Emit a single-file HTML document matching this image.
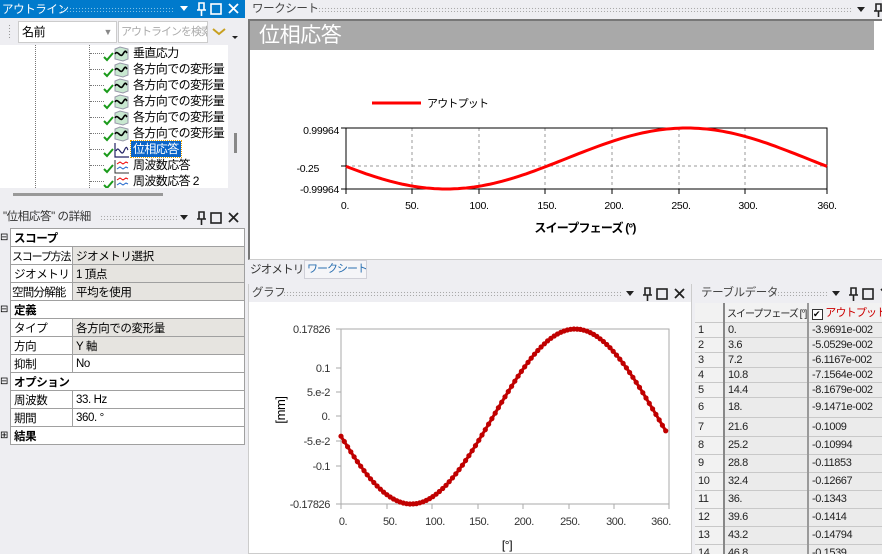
<!DOCTYPE html>
<html><head><meta charset="utf-8"><style>
*{box-sizing:border-box;margin:0;padding:0}
body{width:882px;height:554px;overflow:hidden;background:#eeeef2;font-family:"Liberation Sans","Noto Sans CJK JP",sans-serif;font-size:12px;color:#000;position:relative;letter-spacing:-0.4px}
.abs{position:absolute}
.tb{position:absolute;height:18px;line-height:18px;font-size:11.5px;color:#444;padding-left:3px;white-space:nowrap;overflow:hidden}
.dots{position:absolute;top:7px;height:5px;background-image:radial-gradient(#aaa 0.6px,transparent 0.8px);background-size:3px 3px}
table{border-collapse:collapse;table-layout:fixed}
.det td{border:1px solid #a0a0a0;height:18px;padding-left:3px;font-size:11.5px;white-space:nowrap;overflow:hidden}
.det td.v{background:#e6e4e0}
.det td.h{font-weight:bold}
.tr{position:absolute;left:133px;font-size:12px;height:16px;line-height:16px;white-space:nowrap;letter-spacing:-0.6px}
.tt td{border-bottom:1px solid #c8c8c8;border-right:2px solid #9a9a9a;padding-left:3px;font-size:11px;color:#222;background:#ebebeb;white-space:nowrap;overflow:hidden}
.tt td.i{background:#f2f2f2;border-right:2px solid #888}
</style></head><body>

<div class="abs" style="left:0;top:0;width:245px;height:18px;background:#007acc"></div>
<div class="abs" style="left:2px;top:1px;color:#fff;font-size:11.5px">アウトライン</div>
<div class="abs" style="left:60px;top:7px;width:115px;height:5px;background-image:radial-gradient(#7fbfe6 0.6px,transparent 0.8px);background-size:3px 3px"></div>
<svg class="abs" style="left:178px;top:0" width="67" height="18"><path d="M2 6h8l-4 5z" fill="#fff"/><path d="M21 3h5v7h-5zM19 10h9M23.5 10v6" stroke="#fff" stroke-width="1.6" fill="none"/><rect x="33" y="4" width="10" height="10" stroke="#fff" stroke-width="1.6" fill="none"/><path d="M51 4l9 9M60 4l-9 9" stroke="#fff" stroke-width="1.8"/></svg>

<div class="abs" style="left:8px;top:24px;width:3px;height:16px;background-image:radial-gradient(#999 0.6px,transparent 0.8px);background-size:3px 3px"></div>
<div class="abs" style="left:18px;top:21px;width:99px;height:22px;background:#fff;border:1px solid #ccc;font-size:12px;line-height:20px;padding-left:3px">名前<span style="position:absolute;right:4px;color:#888;font-size:9px">▼</span></div>
<div class="abs" style="left:118px;top:21px;width:90px;height:22px;background:#fff;border:1px solid #ccc;font-size:11px;line-height:20px;padding-left:2px;color:#aaa;overflow:hidden;white-space:nowrap;letter-spacing:-1px">アウトラインを検索</div>
<svg class="abs" style="left:210px;top:24px" width="32" height="18"><path d="M3 5l6 5 6-5" stroke="#c8a020" stroke-width="2" fill="none"/><path d="M22 12h6l-3 3z" fill="#222"/></svg>

<div class="abs" style="left:0;top:45px;width:228px;height:143px;background:#fff;overflow:hidden">
<div class="abs" style="left:35px;top:0;width:1px;height:143px;border-left:1px dotted #777"></div>
<div class="abs" style="left:89px;top:0;width:1px;height:143px;border-left:1px dotted #777"></div>
</div>
<div id="tree" class="abs" style="left:0;top:0;width:228px;height:188px;overflow:hidden"></div>
<div class="abs" style="left:234px;top:133px;width:3px;height:20px;background:#888"></div>
<div class="abs" style="left:13px;top:193px;width:150px;height:3px;background:#999"></div>

<div class="tb" style="left:0;top:208px;width:245px;color:#333">"位相応答" の詳細</div>
<div class="dots" style="left:100px;top:215px;width:77px"></div>
<svg class="abs" style="left:178px;top:209px" width="67" height="18"><path d="M2 6h8l-4 5z" fill="#222"/><path d="M21 3h5v7h-5zM19 10h9M23.5 10v6" stroke="#222" stroke-width="1.6" fill="none"/><rect x="33" y="4" width="10" height="10" stroke="#222" stroke-width="1.6" fill="none"/><path d="M51 4l9 9M60 4l-9 9" stroke="#222" stroke-width="1.8"/></svg>
<table class="det abs" style="left:10px;top:228px;width:234px;background:#fff">
<colgroup><col style="width:62px"><col style="width:172px"></colgroup>
<tr><td colspan="2" class="h">スコープ</td></tr>
<tr><td style="letter-spacing:-1.2px;font-size:11px;padding-left:1px">スコープ方法</td><td class="v">ジオメトリ選択</td></tr>
<tr><td>ジオメトリ</td><td class="v">1 頂点</td></tr>
<tr><td style="letter-spacing:-0.8px;padding-left:1px">空間分解能</td><td class="v">平均を使用</td></tr>
<tr><td colspan="2" class="h">定義</td></tr>
<tr><td>タイプ</td><td class="v">各方向での変形量</td></tr>
<tr><td>方向</td><td class="v">Y 軸</td></tr>
<tr><td>抑制</td><td>No</td></tr>
<tr><td colspan="2" class="h">オプション</td></tr>
<tr><td>周波数</td><td>33. Hz</td></tr>
<tr><td>期間</td><td>360. °</td></tr>
<tr><td colspan="2" class="h">結果</td></tr>
</table>
<div class="abs" style="left:0;top:232px;font-size:10px">⊟</div>
<div class="abs" style="left:0;top:304px;font-size:10px">⊟</div>
<div class="abs" style="left:0;top:376px;font-size:10px">⊟</div>
<div class="abs" style="left:0;top:430px;font-size:10px">⊞</div>

<div class="tb" style="left:249px;top:0;width:633px">ワークシート</div>
<div class="dots" style="left:318px;top:7px;width:534px"></div>
<svg class="abs" style="left:855px;top:1px" width="27" height="18"><path d="M2 6h8l-4 5z" fill="#222"/><path d="M21 3h5v7h-5zM19 10h9M23.5 10v6" stroke="#222" stroke-width="1.6" fill="none"/></svg>
<div class="abs" style="left:248px;top:19px;width:634px;height:241px;background:#fff;border:2px solid #777;border-right:none;border-bottom:1px solid #ccc"></div>
<div class="abs" style="left:250px;top:21px;width:624px;height:29px;background:#a9a9a9;color:#fff;font-size:21px;line-height:29px;padding-left:9px">位相応答</div>
<svg class="abs" style="left:248px;top:50px" width="634" height="210" font-family="Liberation Sans, Noto Sans CJK JP, sans-serif">
<line x1="124" y1="53" x2="173" y2="53" stroke="#f00" stroke-width="3"/>
<text x="179" y="57" font-size="11" letter-spacing="-0.8">アウトプット</text>
<g stroke="#999" stroke-dasharray="3,3" stroke-width="1">
<line x1="164" y1="78" x2="164" y2="139"/><line x1="231" y1="78" x2="231" y2="139"/><line x1="297" y1="78" x2="297" y2="139"/><line x1="364" y1="78" x2="364" y2="139"/><line x1="431" y1="78" x2="431" y2="139"/><line x1="497" y1="78" x2="497" y2="139"/><line x1="98" y1="116" x2="579" y2="116"/></g>
<rect x="98" y="78" width="481" height="61" fill="none" stroke="#000" stroke-width="1"/>
<g stroke="#000"><line x1="93" y1="78" x2="98" y2="78"/><line x1="93" y1="116" x2="98" y2="116"/><line x1="93" y1="139" x2="98" y2="139"/>
<line x1="98" y1="139" x2="98" y2="144"/><line x1="164" y1="139" x2="164" y2="144"/><line x1="231" y1="139" x2="231" y2="144"/><line x1="297" y1="139" x2="297" y2="144"/><line x1="364" y1="139" x2="364" y2="144"/><line x1="431" y1="139" x2="431" y2="144"/><line x1="497" y1="139" x2="497" y2="144"/><line x1="579" y1="139" x2="579" y2="144"/></g>
<polyline id="c1" fill="none" stroke="#f00" stroke-width="3"/>
<g font-size="10.5" text-anchor="end" letter-spacing="-0.3"><text x="91" y="84">0.99964</text><text x="71" y="122">-0.25</text><text x="91" y="143">-0.99964</text></g>
<g font-size="10.5" text-anchor="middle" letter-spacing="-0.3"><text x="97" y="159">0.</text><text x="164" y="159">50.</text><text x="231" y="159">100.</text><text x="299" y="159">150.</text><text x="366" y="159">200.</text><text x="433" y="159">250.</text><text x="500" y="159">300.</text><text x="579" y="159">360.</text></g>
<text x="337" y="182" font-size="12" text-anchor="middle" font-weight="bold" letter-spacing="-0.8">スイープフェーズ (°)</text>
</svg>
<div class="abs" style="left:874px;top:21px;width:8px;height:220px;background:#fff"></div>

<div class="abs" style="left:250px;top:261px;font-size:11.5px;color:#333;white-space:nowrap;letter-spacing:-0.8px">ジオメトリ</div>
<div class="abs" style="left:304px;top:260px;width:63px;height:19px;background:#f5f5f8;border:1px solid #d0d0d8;color:#2a6fb0;font-size:11px;padding-left:2px;line-height:17px;white-space:nowrap;letter-spacing:-1px;overflow:hidden">ワークシート</div>

<div class="abs" style="left:248px;top:284px;width:444px;height:270px;background:#fff;border:1px solid #ccc"></div>
<div class="tb" style="left:249px;top:284px;width:442px;background:#eeeef2">グラフ</div>
<div class="dots" style="left:283px;top:291px;width:340px"></div>
<svg class="abs" style="left:624px;top:285px" width="67" height="18"><path d="M2 6h8l-4 5z" fill="#222"/><path d="M21 3h5v7h-5zM19 10h9M23.5 10v6" stroke="#222" stroke-width="1.6" fill="none"/><rect x="33" y="4" width="10" height="10" stroke="#222" stroke-width="1.6" fill="none"/><path d="M51 4l9 9M60 4l-9 9" stroke="#222" stroke-width="1.8"/></svg>
<svg class="abs" style="left:245px;top:302px" width="447" height="252" font-family="Liberation Sans, sans-serif">
<rect x="96" y="27" width="328" height="175" fill="none" stroke="#aaa"/>
<g stroke="#aaa"><line x1="91" y1="27" x2="96" y2="27"/><line x1="91" y1="66" x2="96" y2="66"/><line x1="91" y1="90" x2="96" y2="90"/><line x1="91" y1="114" x2="96" y2="114"/><line x1="91" y1="139" x2="96" y2="139"/><line x1="91" y1="164" x2="96" y2="164"/><line x1="91" y1="202" x2="96" y2="202"/>
<line x1="96" y1="202" x2="96" y2="207"/><line x1="142" y1="202" x2="142" y2="207"/><line x1="187" y1="202" x2="187" y2="207"/><line x1="233" y1="202" x2="233" y2="207"/><line x1="278" y1="202" x2="278" y2="207"/><line x1="324" y1="202" x2="324" y2="207"/><line x1="369" y1="202" x2="369" y2="207"/><line x1="424" y1="202" x2="424" y2="207"/></g>
<g id="c2"></g>
<g font-size="11" fill="#333" text-anchor="end"><text x="85" y="31">0.17826</text><text x="85" y="70">0.1</text><text x="85" y="94">5.e-2</text><text x="85" y="118">0.</text><text x="85" y="143">-5.e-2</text><text x="85" y="168">-0.1</text><text x="85" y="206">-0.17826</text></g>
<g font-size="11" fill="#333" text-anchor="middle"><text x="98" y="223">0.</text><text x="145" y="223">50.</text><text x="190" y="223">100.</text><text x="234" y="223">150.</text><text x="279" y="223">200.</text><text x="325" y="223">250.</text><text x="371" y="223">300.</text><text x="416" y="223">360.</text></g>
<text x="262" y="247" font-size="12" text-anchor="middle">[°]</text>
<text transform="translate(40,108) rotate(-90)" font-size="13" text-anchor="middle">[mm]</text>
</svg>

<div class="tb" style="left:698px;top:284px;width:184px">テーブルデータ</div>
<div class="dots" style="left:768px;top:291px;width:60px"></div>
<svg class="abs" style="left:830px;top:285px" width="52" height="18"><path d="M2 6h8l-4 5z" fill="#222"/><path d="M21 3h5v7h-5zM19 10h9M23.5 10v6" stroke="#222" stroke-width="1.6" fill="none"/><rect x="33" y="4" width="10" height="10" stroke="#222" stroke-width="1.6" fill="none"/><path d="M51 4l9 9" stroke="#222" stroke-width="1.8"/></svg>
<div class="abs" style="left:695px;top:303px;width:187px;height:251px;background:#ebebeb;overflow:hidden">
<table class="tt" style="width:200px">
<colgroup><col style="width:29px"><col style="width:84px"><col style="width:87px"></colgroup>
<tr style="height:19px"><td class="i" style="background:#f2f2f2"></td><td style="background:#f2f2f2;letter-spacing:-1px;font-size:10px;padding-left:2px">スイープフェーズ [°]</td><td style="background:#f2f2f2;color:#c00;letter-spacing:-0.8px"><span style="display:inline-block;width:11px;height:11px;border:1px solid #333;background:#fff;color:#000;font-size:9px;line-height:9px;vertical-align:-1px">✔</span> アウトプット</td></tr>
<tr style="height:15px"><td class="i">1</td><td>0.</td><td>-3.9691e-002</td></tr>
<tr style="height:15px"><td class="i">2</td><td>3.6</td><td>-5.0529e-002</td></tr>
<tr style="height:15px"><td class="i">3</td><td>7.2</td><td>-6.1167e-002</td></tr>
<tr style="height:15px"><td class="i">4</td><td>10.8</td><td>-7.1564e-002</td></tr>
<tr style="height:15px"><td class="i">5</td><td>14.4</td><td>-8.1679e-002</td></tr>
<tr style="height:20px"><td class="i">6</td><td>18.</td><td>-9.1471e-002</td></tr>
<tr style="height:19px"><td class="i">7</td><td>21.6</td><td>-0.1009</td></tr>
<tr style="height:18px"><td class="i">8</td><td>25.2</td><td>-0.10994</td></tr>
<tr style="height:18px"><td class="i">9</td><td>28.8</td><td>-0.11853</td></tr>
<tr style="height:18px"><td class="i">10</td><td>32.4</td><td>-0.12667</td></tr>
<tr style="height:18px"><td class="i">11</td><td>36.</td><td>-0.1343</td></tr>
<tr style="height:18px"><td class="i">12</td><td>39.6</td><td>-0.1414</td></tr>
<tr style="height:18px"><td class="i">13</td><td>43.2</td><td>-0.14794</td></tr>
<tr style="height:18px"><td class="i">14</td><td>46.8</td><td>-0.1539</td></tr>
</table></div>

<script>
var p=[];for(var d=0;d<=360;d+=3){var f=-Math.cos((d-75)*Math.PI/180);p.push((98+481*d/360).toFixed(1)+","+(108.5-30.5*f).toFixed(1));}
document.getElementById("c1").setAttribute("points",p.join(" "));
var g="",q=[];for(var d=0;d<=360;d+=3.6){var f=-Math.cos((d-77)*Math.PI/180);var x=96+328*d/360,y=114.5-87.5*f;q.push(x.toFixed(1)+","+y.toFixed(1));g+='<circle cx="'+x.toFixed(1)+'" cy="'+y.toFixed(1)+'" r="2.6" fill="#c00000"/>';}
document.getElementById("c2").innerHTML='<polyline points="'+q.join(" ")+'" fill="none" stroke="#c00000" stroke-width="3"/>'+g;
var items=["垂直応力","各方向での変形量","各方向での変形量","各方向での変形量","各方向での変形量","各方向での変形量","位相応答","周波数応答","周波数応答 2"];
var h="";for(var i=0;i<items.length;i++){var y=45+i*16;
h+='<div class="abs" style="left:90px;top:'+(y+8)+'px;width:14px;border-top:1px dotted #777"></div>';
h+='<svg class="abs" style="left:102px;top:'+(y+1)+'px" width="28" height="16"><path d="M2 11l3 3 6-7" stroke="#1a9a1a" stroke-width="2" fill="none"/>';
if(i<6)h+='<path d="M13 3l5-2 8 2v10l-5 2-8-2z" fill="#c8e8d0" stroke="#99a"/><path d="M13 8c3-5 5 5 8 0s3-2 4-1" stroke="#000" stroke-width="1.6" fill="none"/>';
else if(i==6)h+='<path d="M13 1v14h14M14 9c3-7 5 7 8 0s3-2 4-1" stroke="#226" stroke-width="1.2" fill="none"/>';
else h+='<path d="M13 2v13h14" stroke="#333" fill="none"/><path d="M15 6l3-2 3 2 3-2 2 1" stroke="#e00" fill="none"/><path d="M15 11l3-2 3 2 3-2 2 1" stroke="#26c" fill="none"/>';
h+='</svg>';
if(i==6)h+='<div class="tr" style="top:'+y+'px;left:131px;background:#0a64c8;color:#fff;padding:0 2px;outline:1px dotted #e8a000">'+items[i]+'</div>';
else h+='<div class="tr" style="top:'+y+'px">'+items[i]+'</div>';}
document.getElementById("tree").innerHTML=h;
</script>
</body></html>
